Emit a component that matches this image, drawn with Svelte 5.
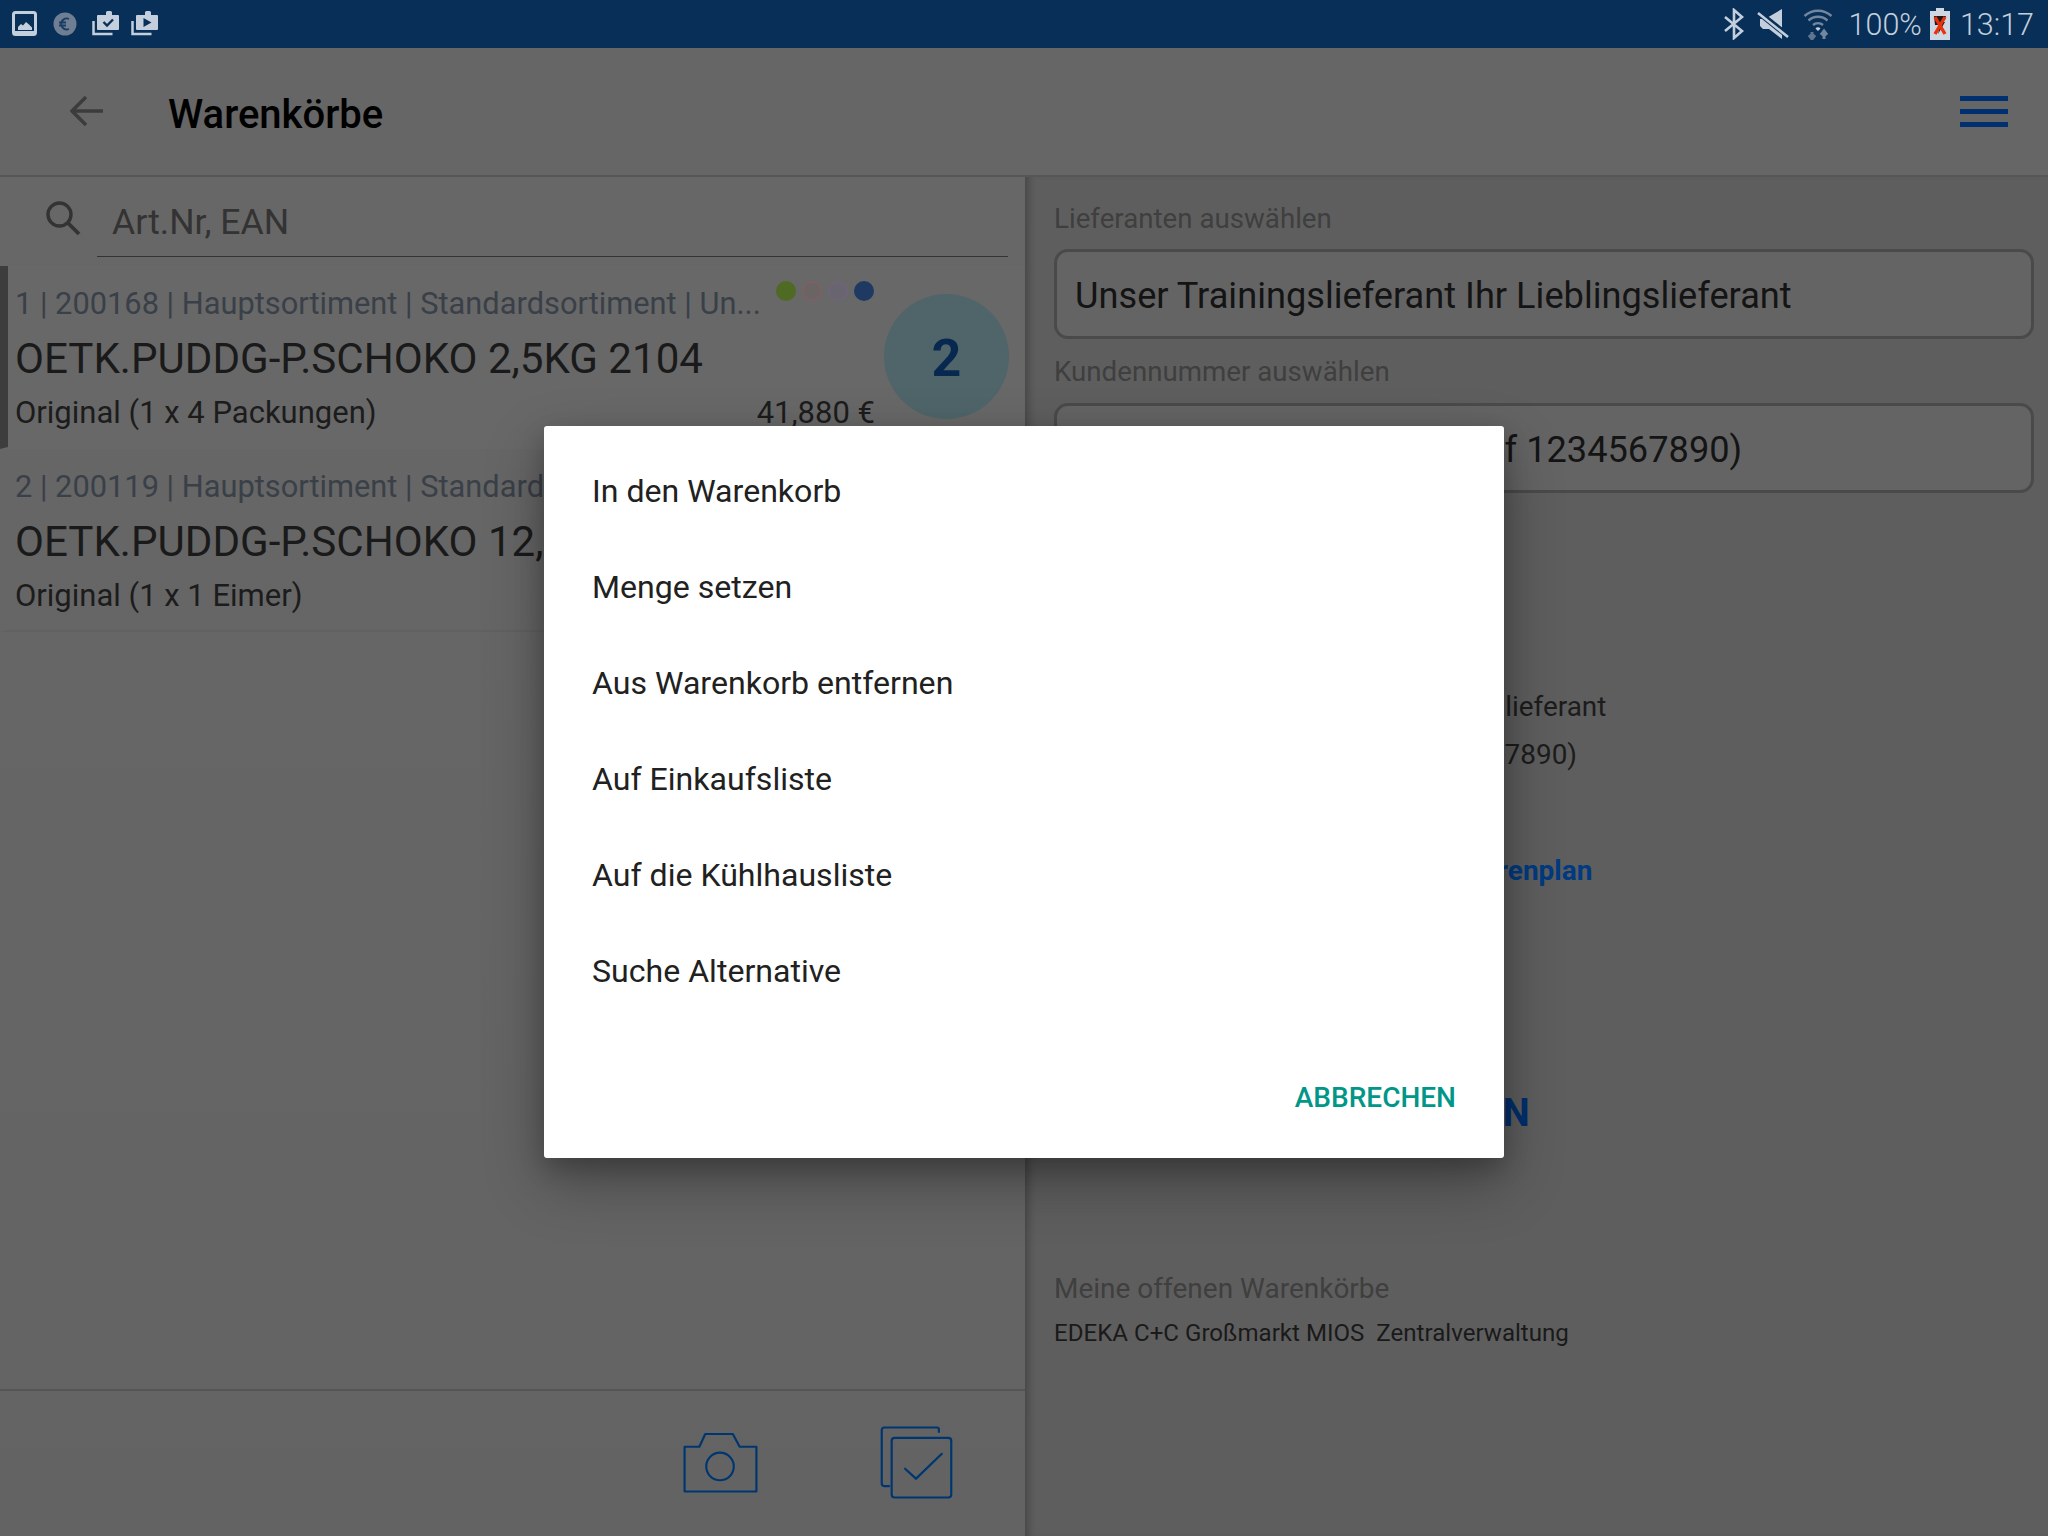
<script>
  let menu = ['In den Warenkorb', 'Menge setzen', 'Aus Warenkorb entfernen', 'Auf Einkaufsliste', 'Auf die Kühlhausliste', 'Suche Alternative'];
  let items = [
    { meta: '1 | 200168 | Hauptsortiment | Standardsortiment | Un...', name: 'OETK.PUDDG-P.SCHOKO 2,5KG 2104', unit: 'Original (1 x 4 Packungen)', price: '41,880 €', count: 2, active: true },
    { meta: '2 | 200119 | Hauptsortiment | Standardsortiment | Un...', name: 'OETK.PUDDG-P.SCHOKO 12,5KG 2104', unit: 'Original (1 x 1 Eimer)', price: '', count: 0, active: false }
  ];
</script>

<div class="page">
  <div class="status">
    <div class="status-left">
      <svg width="26" height="26" viewBox="0 0 26 26"><rect x="1.5" y="1.5" width="22" height="22" rx="2" fill="none" stroke="#c3cfdd" stroke-width="3"/><path d="M2 20h22v4H2z" fill="#c3cfdd"/><path d="M6 19v-3l3-3 2 1.500 3-3.500 3 2.500 3 3v2.500z" fill="#c3cfdd"/></svg>
      <svg class="euro" width="24" height="24" viewBox="0 0 24 24"><circle cx="12" cy="12" r="11.500" fill="#6f7f93"/><path d="M16 7a5.500 5.500 0 1 0 0 10M6 10.500h7M6 13.500h7" fill="none" stroke="#1b3d63" stroke-width="1.800"/></svg>
      <svg class="case" width="28" height="26" viewBox="0 0 28 26"><path d="M1.500 11v13h19" fill="none" stroke="#c3cfdd" stroke-width="2.500"/><path d="M14 5V2.500a1.500 1.500 0 0 1 1.500-1.500h3A1.500 1.500 0 0 1 20 2.500V5h6a1 1 0 0 1 1 1v13a1 1 0 0 1-1 1H6a1 1 0 0 1-1-1V6a1 1 0 0 1 1-1z" fill="#c3cfdd"/><path d="M11.500 12l3.500 3.500 6-6" fill="none" stroke="#082f57" stroke-width="2.400"/></svg>
      <svg class="case" width="28" height="26" viewBox="0 0 28 26"><path d="M1.500 11v13h19" fill="none" stroke="#c3cfdd" stroke-width="2.500"/><path d="M14 5V2.500a1.500 1.500 0 0 1 1.500-1.500h3A1.500 1.500 0 0 1 20 2.500V5h6a1 1 0 0 1 1 1v13a1 1 0 0 1-1 1H6a1 1 0 0 1-1-1V6a1 1 0 0 1 1-1z" fill="#c3cfdd"/><path d="M12.500 8v9l8-4.500z" fill="#082f57"/></svg>
    </div>
    <div class="status-right">
      <svg class="bt" width="22" height="32" viewBox="0 0 22 32"><path d="M2 9l17 14-8 7V2l8 7L2 23" fill="none" stroke="#c3cfdd" stroke-width="2.600"/></svg>
      <svg class="mute" width="32" height="32" viewBox="0 0 32 32"><path d="M25 1v30L12 21H6l-3-3V11h5z" fill="#c3cfdd"/><path d="M1 4l30 24" stroke="#082f57" stroke-width="6"/><path d="M1 5l30 24" stroke="#c3cfdd" stroke-width="2.600"/></svg>
      <svg class="wifi" width="30" height="32" viewBox="0 0 30 32"><path d="M1.500 8a20 20 0 0 1 27 0M5.500 12.500a14 14 0 0 1 19 0M10 17a7.500 7.500 0 0 1 10 0" fill="none" stroke="#72879f" stroke-width="2.400"/><path d="M12.500 20.500a3 3 0 0 1 5 0L15 23z" fill="#c3cfdd"/><path d="M9 24v6M6 27l3 4 3-4" fill="none" stroke="#5e7690" stroke-width="3"/><path d="M21 31v-7M18 27l3-4 3 4" fill="none" stroke="#72879f" stroke-width="3"/></svg>
      <span class="pct">100%</span>
      <svg class="batt" width="20" height="32" viewBox="0 0 20 32"><path d="M6 0h8v3h6v29H0V3h6z" fill="#cfd8e2"/><path d="M4 8h12l-3 6h2l-7 12 2-9H5z" fill="#1a1a1a"/><path d="M5 9l10 17M15 9L5 26" stroke="#e8320c" stroke-width="3.400"/></svg>
      <span class="clock">13:17</span>
    </div>
  </div>

  <header class="appbar">
    <svg class="back" width="34" height="32" viewBox="0 0 34 32"><path d="M33 16H3M16 2L2 16l14 14" fill="none" stroke="#3c3c3c" stroke-width="3.400"/></svg>
    <h1>Warenkörbe</h1>
    <div class="burger"><i></i><i></i><i></i></div>
  </header>

  <div class="body">
    <section class="left">
      <div class="search">
        <svg width="36" height="36" viewBox="0 0 36 36"><circle cx="14.500" cy="14.500" r="11.500" fill="none" stroke="#333" stroke-width="3.400"/><path d="M23 23l11 11" stroke="#333" stroke-width="3.800"/></svg>
        <div class="search-field">Art.Nr, EAN</div>
      </div>

      {#each items as item}
        <div class="item" class:active={item.active}>
          <div class="item-main">
            <div class="meta-row">
              <span class="meta">{item.meta}</span>
              {#if item.active}
                <span class="dots"><i class="d1"></i><i class="d2"></i><i class="d3"></i><i class="d4"></i></span>
              {/if}
            </div>
            <div class="name">{item.name}</div>
            <div class="unit-row"><span>{item.unit}</span><span>{item.price}</span></div>
          </div>
          {#if item.count}
            <div class="badge">{item.count}</div>
          {/if}
        </div>
      {/each}

      <div class="footer">
        <svg class="cam" width="75" height="61" viewBox="0 0 76 62"><path d="M1.500 60.500V15h15l6-13h28l7 13h17v45.500z" fill="none" stroke="#00366f" stroke-width="2.200" stroke-linejoin="round"/><circle cx="37.500" cy="35" r="14" fill="none" stroke="#00366f" stroke-width="2.200"/></svg>
        <svg class="stack" width="73" height="73" viewBox="0 0 73 73.500"><path d="M59 6V3a1.500 1.500 0 0 0-1.500-1.500H4A2.500 2.500 0 0 0 1.500 4v54A2.500 2.500 0 0 0 4 60.500h5" fill="none" stroke="#00366f" stroke-width="2.200" stroke-linecap="round"/><rect x="11.500" y="12" width="60" height="60" rx="3" fill="none" stroke="#00366f" stroke-width="2.200"/><path d="M25 43l11 10 26-25" fill="none" stroke="#00366f" stroke-width="2.200" stroke-linecap="round"/></svg>
      </div>
    </section>

    <section class="right">
      <div class="label first">Lieferanten auswählen</div>
      <div class="select">Unser Trainingslieferant Ihr Lieblingslieferant</div>
      <div class="label">Kundennummer auswählen</div>
      <div class="select acct">Kundennummer (Konto auf 1234567890)</div>
      <div class="line one">Unser Trainingslieferant Ihr Lieblingslieferant</div>
      <div class="line two">Kundennummer (Konto auf 1234567890)</div>
      <div class="link">Unser Trainingslieferant und Ihr Warenplan</div>
      <div class="cta">DEN WARENKORB ÖFFNEN</div>
      <div class="label open">Meine offenen Warenkörbe</div>
      <div class="small">EDEKA C+C Großmarkt MIOS&nbsp; Zentralverwaltung</div>
    </section>
  </div>

  <div class="dialog">
    <ul>
      {#each menu as m}
        <li>{m}</li>
      {/each}
    </ul>
    <div class="actions"><span>ABBRECHEN</span></div>
  </div>
</div>

<style>
  :global(body) { margin:0; background:#666; }
  .page { position:relative; width:2048px; height:1536px; overflow:hidden; display:flex; flex-direction:column; font-family:Roboto,"Liberation Sans",sans-serif; }

  .status { height:48px; flex:none; background:#082f57; display:flex; align-items:center; justify-content:space-between; padding:0 14px 0 12px; box-sizing:border-box; color:#c3cfdd; }
  .status-left, .status-right { display:flex; align-items:center; }
  .status svg { display:block; }
  .euro { margin-left:15px; }
  .case { margin-left:15px; margin-top:-2px; }
  .case + .case { margin-left:11px; }
  .mute { margin-left:12px; }
  .wifi { margin-left:14px; }
  .pct { font-size:30.5px; font-weight:300; margin-left:16px; }
  .batt { margin-left:8px; }
  .clock { font-size:30.5px; font-weight:300; margin-left:10px; }

  .appbar { height:129px; flex:none; box-sizing:border-box; background:#666; border-bottom:2px solid #565656; display:flex; align-items:center; padding:0 40px 0 70px; }
  .appbar h1 { margin:5px 0 0 64px; font-size:40px; font-weight:500; color:#000; flex:1; }
  .back { margin-top:-1px; }
  .burger { display:flex; flex-direction:column; gap:8px; width:48px; margin-top:-1px; }
  .burger i { display:block; height:5px; background:#00306f; }

  .body { flex:1; display:flex; min-height:0; }
  .left { width:1025px; flex:none; display:flex; flex-direction:column; background:linear-gradient(#676767,#636363); }
  .search { height:81px; flex:none; display:flex; align-items:center; padding-left:45px; padding-right:17px; margin-bottom:8px; box-sizing:border-box; }
  .search-field { flex:1; margin-left:16px; height:79px; box-sizing:border-box; border-bottom:1px solid #333; font-size:35.6px; color:#333; line-height:89px; padding-left:15px; }

  .item { height:183px; box-sizing:border-box; flex:none; display:flex; border-left:8px solid transparent; padding-left:7px; border-bottom:2px solid #616161; }
  .item.active { border-left-color:#3d3d3d; background:#686868; border-bottom-color:#686868; }
  .item-main { width:860px; flex:none; }
  .meta-row { display:flex; justify-content:space-between; height:52px; margin-top:12px; }
  .meta { font-size:30.8px; line-height:52px; color:#3a4048; white-space:nowrap; }
  .dots { display:flex; gap:6px; height:21px; margin:3px 1px 0 0; }
  .dots i { display:block; width:20px; height:20px; border-radius:50%; box-sizing:border-box; }
  .d1 { background:#4f6a22; }
  .d2 { background:#6a6465; border:2px solid #7c6064; }
  .d3 { background:#696570; border:2px solid #706478; }
  .d4 { background:#1e3a62; }
  .name { font-size:42.1px; line-height:58px; color:#1a1a1a; white-space:nowrap; }
  .unit-row { display:flex; justify-content:space-between; font-size:31px; line-height:50px; color:#1c1c1c; white-space:nowrap; }
  .badge { width:125px; height:125px; box-sizing:border-box; margin:28px 0 0 9px; padding-top:4px; border-radius:50%; background:#4f6569; color:#082850; font-size:52px; font-weight:700; display:flex; align-items:center; justify-content:center; }

  .footer { margin-top:auto; height:147px; flex:none; box-sizing:border-box; border-top:2px solid #555; display:flex; align-items:center; justify-content:flex-end; gap:122px; padding:0 72px 3px 0; }

  .right { flex:1; background:#5e5e5e; box-shadow:inset 9px 0 9px -6px rgba(0,0,0,.28); padding:0 14px 0 29px; box-sizing:border-box; min-width:0; }
  .label { font-size:27.7px; line-height:34px; color:#3f3f3f; padding-top:16px; height:48px; }
  .label.first { padding-top:25px; height:47px; }
  .select { height:90px; box-sizing:border-box; border:3px solid #4a4a4a; border-radius:14px; background:#646464; font-size:36.2px; line-height:88px; padding-left:18px; color:#141414; white-space:nowrap; overflow:hidden; }
  .select.acct { padding-left:26px; }
  .line { font-size:27.9px; line-height:48px; color:#1c1c1c; white-space:nowrap; }
  .line.one { margin-top:190px; }
  .line.two { padding-left:15px; }
  .link { margin-top:72px; font-size:28px; font-weight:700; line-height:40px; color:#003a80; white-space:nowrap; }
  .cta { margin-top:197px; padding-left:12px; font-size:38px; font-weight:700; line-height:50px; color:#002f6c; white-space:nowrap; }
  .label.open { margin-top:134px; font-size:28px; padding:0; height:auto; }
  .small { margin-top:9px; font-size:24.1px; line-height:36px; color:#1a1a1a; white-space:nowrap; }

  .dialog { position:absolute; left:544px; top:426px; width:960px; height:732px; background:#fff; border-radius:3px; box-shadow:0 24px 60px rgba(0,0,0,.3), 0 10px 24px rgba(0,0,0,.2); box-sizing:border-box; display:flex; flex-direction:column; }
  .dialog ul { list-style:none; margin:0; padding:17px 48px 0; }
  .dialog li { height:96px; line-height:96px; font-size:32.1px; color:#212121; }
  .actions { margin-top:auto; display:flex; justify-content:flex-end; padding:0 48px 39px; }
  .actions span { font-size:28px; font-weight:500; line-height:42px; color:#009688; }
</style>
